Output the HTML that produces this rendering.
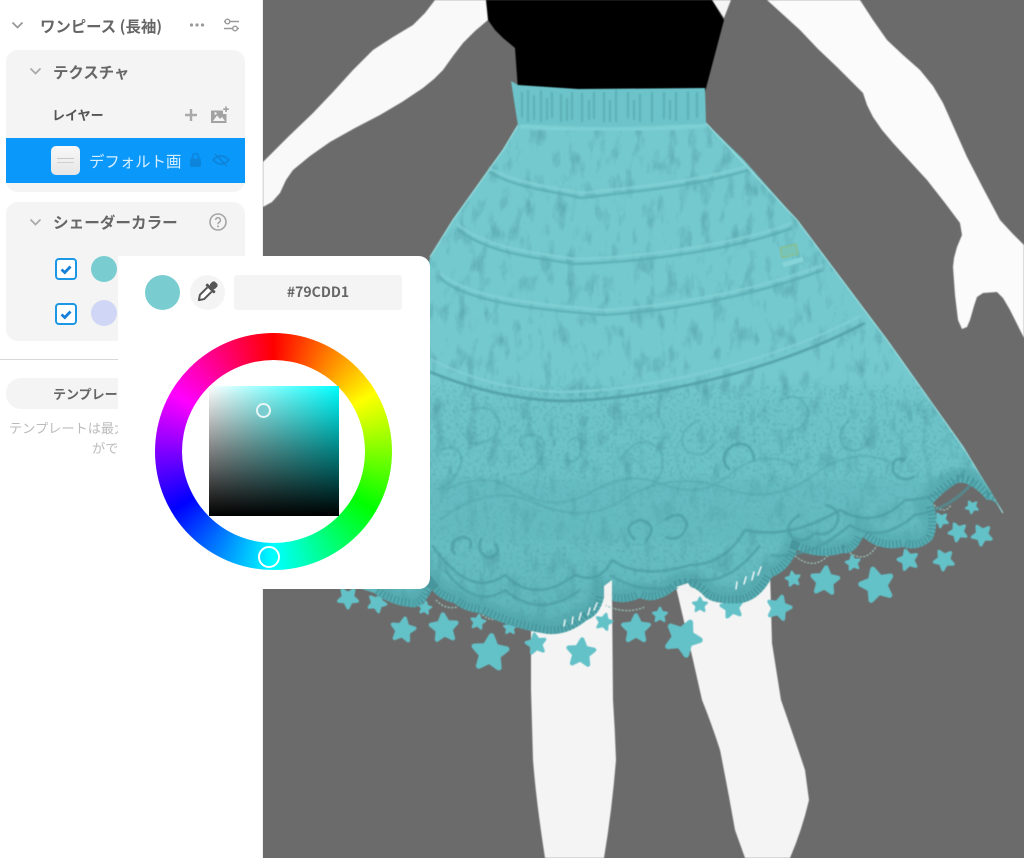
<!DOCTYPE html>
<html lang="ja"><head><meta charset="utf-8"><title>Color</title>
<style>
*{box-sizing:border-box}
html,body{margin:0;padding:0;width:1024px;height:858px;overflow:hidden;background:#6b6b6b}
body{position:relative;font-family:"Liberation Sans","Noto Sans CJK JP",sans-serif}
#scene{position:absolute;left:0;top:0;width:1024px;height:858px;filter:blur(.5px)}
#panel{position:absolute;left:0;top:0;width:263px;height:858px;background:#fff;border-right:1px solid #eee;filter:blur(.35px)}
.abs{position:absolute}
.t{position:absolute;white-space:nowrap;line-height:20px;font-family:"Noto Sans CJK JP",sans-serif}
.card{position:absolute;left:6px;width:239px;background:#f4f4f4;border-radius:12px}
.cb{position:absolute;left:55px;width:22px;height:22px;border:2px solid #1c97e6;border-radius:4px;background:#fff}
.dot{position:absolute;border-radius:50%}
#pop{position:absolute;left:118px;top:256px;width:312px;height:333px;background:#fff;border-radius:0 11px 11px 11px;filter:blur(.3px)}
</style></head><body>

<svg id="scene" viewBox="0 0 1024 858" xmlns="http://www.w3.org/2000/svg">
<defs>
<filter id="tex" x="0" y="0" width="100%" height="100%" color-interpolation-filters="sRGB">
<feTurbulence type="fractalNoise" baseFrequency="0.09 0.04" numOctaves="4" seed="7" result="n"/>
<feColorMatrix in="n" type="matrix" values="0 0 0 0 0.3  0 0 0 0 0.6  0 0 0 0 0.63  0 0 0 1.5 -0.78"/>
<feComposite in2="SourceAlpha" operator="in" result="d"/>
<feMerge><feMergeNode in="SourceGraphic"/><feMergeNode in="d"/></feMerge>
</filter>
<filter id="fine" x="0" y="0" width="100%" height="100%" color-interpolation-filters="sRGB">
<feTurbulence type="fractalNoise" baseFrequency="0.3" numOctaves="2" seed="3"/>
<feColorMatrix type="matrix" values="0 0 0 0 0.3  0 0 0 0 0.6  0 0 0 0 0.63  0 0 0 2 -0.98"/>
</filter>
<filter id="soft"><feGaussianBlur stdDeviation="0.7"/></filter>
<filter id="soft3"><feGaussianBlur stdDeviation="3"/></filter>
<linearGradient id="sk" gradientUnits="userSpaceOnUse" x1="0" y1="125" x2="0" y2="630">
<stop offset="0" stop-color="#74c9ce"/><stop offset=".5" stop-color="#74c9ce"/><stop offset=".56" stop-color="#6ec4c9"/><stop offset=".8" stop-color="#68c0c5"/><stop offset="1" stop-color="#5db5ba"/>
</linearGradient>
<polygon id="s" points="0,-.9 .27,-.35 .85,-.28 .42,.13 .53,.73 0,.42 -.53,.73 -.42,.13 -.85,-.28 -.27,-.35" stroke-linejoin="round" stroke-width=".3"/>
<path id="edge" d="M1003,513 Q995,498 987,500 Q970,480 957,483 Q945,490 933,503 Q940,525 932,540 Q918,552 903,547 Q880,552 863,537 Q855,555 843,553 Q820,560 797,550 Q790,570 772,577 Q760,600 741,603 Q715,605 705,597 Q690,580 675,590 Q655,605 640,598 Q620,607 604,597 Q600,615 587,620 Q565,638 542,633 Q510,628 480,613 Q465,612 454,603 Q440,600 432,590 Q422,610 410,607 Q390,605 374,593"/>
<clipPath id="skc"><path d="M518,125 L706,123 L744,160 L797,220 L887,340 L963,447 L990,490 L1003,513 Q995,498 987,500 Q970,480 957,483 Q945,490 933,503 Q940,525 932,540 Q918,552 903,547 Q880,552 863,537 Q855,555 843,553 Q820,560 797,550 Q790,570 772,577 Q760,600 741,603 Q715,605 705,597 Q690,580 675,590 Q655,605 640,598 Q620,607 604,597 Q600,615 587,620 Q565,638 542,633 Q510,628 480,613 Q465,612 454,603 Q440,600 432,590 Q422,610 410,607 Q390,605 374,593 L350,585 L380,500 L430,257 L453,220 L503,150Z"/></clipPath>
</defs>
<rect width="1024" height="858" fill="#6b6b6b"/>

<!-- legs -->
<path d="M531,620 L612,590 L613,700 Q615,730 616,760 Q612,810 604,858 L545,858 Q536,800 533,760 L531,690Z" fill="#f4f4f4"/>
<path d="M672,570 L770,570 L772,643 L781,700 Q795,740 805,770 L809,800 Q802,830 790,858 L745,858 L735,830 Q728,790 720,750 Q712,725 702,700 L693,660Z" fill="#f4f4f4"/>

<!-- left arm -->
<path d="M435,0 L425,13 L413,25 L393,37 L373,50 L353,70 L333,92 L313,113 L288,137 L263,162 L263,207 L272,202 L280,193 L286,180 L293,170 L310,156 L330,142 L355,128 L380,115 L402,102 L423,88 L434,79 L443,70 L453,56 L463,43 L475,31 L488,20 L488,0Z" fill="#f9f9f9"/>

<!-- right arm + hand -->
<path d="M767,0 L800,30 L818,49 L837,67 L863,93 L867,105 L873,117 L882,130 L893,143 L927,180 L945,203 L960,223 L962,235 L957,247 L954,258 L953,267 L955,295 L958,320 L962,329 L967,327 L970,320 L974,306 L977,297 L983,293 L997,292 L1003,298 L1010,310 L1024,338 L1024,245 L1012,233 L1000,220 L983,188 L967,157 L955,130 L943,103 L933,86 L920,70 L903,55 L887,40 L873,20 L860,0Z" fill="#fbfbfb"/>
<path d="M712,0 L731,0 L724,18Z" fill="#f5f5f5"/>

<!-- torso -->
<path d="M486,0 L488,20 L495,30 L503,38 L515,48 L518,90 L705,92 L724,20 L712,0Z" fill="#000"/>

<!-- stars -->
<g fill="#63c1c8" stroke="#63c1c8">
<use href="#s" transform="translate(348 598) rotate(180) scale(11)"/>
<use href="#s" transform="translate(377 603) rotate(170) scale(10)"/>
<use href="#s" transform="translate(403 630) rotate(10) scale(13)"/>
<use href="#s" transform="translate(444 628) rotate(-5) scale(15)"/>
<use href="#s" transform="translate(425 608) rotate(10) scale(7)"/>
<use href="#s" transform="translate(490 653) rotate(5) scale(19)"/>
<use href="#s" transform="translate(478 622) rotate(10) scale(8)"/>
<use href="#s" transform="translate(510 628) rotate(0) scale(7)"/>
<use href="#s" transform="translate(536 644) rotate(-10) scale(11)"/>
<use href="#s" transform="translate(581 653) rotate(5) scale(15)"/>
<use href="#s" transform="translate(604 622) rotate(15) scale(9)"/>
<use href="#s" transform="translate(636 629) rotate(0) scale(15)"/>
<use href="#s" transform="translate(683 638) rotate(25) scale(19)"/>
<use href="#s" transform="translate(660 615) rotate(0) scale(8)"/>
<use href="#s" transform="translate(700 605) rotate(0) scale(8)"/>
<use href="#s" transform="translate(732 607) rotate(-10) scale(12)"/>
<use href="#s" transform="translate(779 608) rotate(15) scale(13)"/>
<use href="#s" transform="translate(793 579) rotate(-10) scale(8)"/>
<use href="#s" transform="translate(825 581) rotate(5) scale(15)"/>
<use href="#s" transform="translate(853 563) rotate(-10) scale(8)"/>
<use href="#s" transform="translate(877 585) rotate(-15) scale(18)"/>
<use href="#s" transform="translate(908 560) rotate(-15) scale(11)"/>
<use href="#s" transform="translate(944 560) rotate(-30) scale(11)"/>
<use href="#s" transform="translate(958 532) rotate(-25) scale(10)"/>
<use href="#s" transform="translate(982 535) rotate(-30) scale(11)"/>
<use href="#s" transform="translate(941 520) rotate(-30) scale(8)"/>
<use href="#s" transform="translate(972 507) rotate(-30) scale(7)"/>
</g>
<g fill="none" stroke="#9cc6ba" stroke-width="1.3" stroke-dasharray="2 1.5">
<path d="M795,556 Q815,572 830,553"/>
<path d="M850,553 Q868,565 880,540"/>
<path d="M934,505 Q945,515 951,505"/>
<path d="M436,600 Q445,610 457,607"/>
<path d="M480,612 Q490,625 505,615"/>
<path d="M605,605 Q625,615 645,607"/>
<path d="M893,520 a6,6 0 1 0 .1,0"/>
</g>

<!-- skirt -->
<path id="skirt" filter="url(#tex)" fill="url(#sk)" d="M518,125 L706,123 L744,160 L797,220 L887,340 L963,447 L990,490 L1003,513 Q995,498 987,500 Q970,480 957,483 Q945,490 933,503 Q940,525 932,540 Q918,552 903,547 Q880,552 863,537 Q855,555 843,553 Q820,560 797,550 Q790,570 772,577 Q760,600 741,603 Q715,605 705,597 Q690,580 675,590 Q655,605 640,598 Q620,607 604,597 Q600,615 587,620 Q565,638 542,633 Q510,628 480,613 Q465,612 454,603 Q440,600 432,590 Q422,610 410,607 Q390,605 374,593 L350,585 L380,500 L430,257 L453,220 L503,150Z"/>
<path d="M518,125 L503,150 L453,220 L430,257 M706,123 L797,220 L887,340 L963,447 L1003,513" fill="none" stroke="#9adfe0" stroke-width="1.2"/>
<!-- lace mesh + bottom dark band -->
<g clip-path="url(#skc)">
<rect x="430" y="385" width="580" height="255" filter="url(#fine)" opacity=".55"/>
<use href="#edge" fill="none" stroke="#4fa3a8" stroke-width="30" opacity=".6" filter="url(#soft3)"/>
<rect x="430" y="480" width="560" height="60" fill="#5cb3b8" opacity=".35" filter="url(#soft3)"/>
<use href="#edge" fill="none" stroke="#438f95" stroke-width="16" stroke-dasharray="1.5 2.5" opacity=".75"/>
</g>
<!-- waistband -->
<path d="M511,81 L518,85 L578,89 L705,88 L706,123 L650,130 L518,126Z" fill="#6cc4ca"/>
<g stroke="#4f9fa5" stroke-width="1.7" opacity=".7" filter="url(#soft)">
<path d="M522,92V118M528,90V122M534,95V120M541,90V122M547,98V120M552,92V118M561,94V122M567,98V121M572,92V120M582,93V122M589,100V120M594,92V119M604,92V122M610,100V122M616,90V122M628,92V118M634,100V120M640,94V122M652,92V122M664,92V119M670,100V120M676,92V121M688,92V120M697,92V118"/>
</g>
<path d="M520,126 Q610,134 706,125" fill="none" stroke="#7dd0d4" stroke-width="5" filter="url(#soft)"/>
<!-- tier lines -->
<g fill="none" filter="url(#soft)">
<path d="M489,172 C520,190 560,192 581,198 C630,192 700,186 748,170" stroke="#58abb0" stroke-width="1.8"/>
<path d="M489,168 C520,185 560,188 581,193 C630,188 700,181 748,166" stroke="#82d1d5" stroke-width="2"/>
<path d="M457,229 C490,255 540,258 574,264 C650,262 740,248 792,228" stroke="#58abb0" stroke-width="1.8"/>
<path d="M457,224 C490,250 540,253 574,259 C650,257 740,243 792,223" stroke="#82d1d5" stroke-width="2"/>
<path d="M440,278 C470,305 550,310 603,315 C690,310 770,290 823,270" stroke="#58abb0" stroke-width="1.8"/>
<path d="M440,273 C470,300 550,305 603,310 C690,305 770,285 823,265" stroke="#82d1d5" stroke-width="2"/>
<path d="M430,372 C470,388 510,399 560,401 C640,401 770,373 865,323" stroke="#4f9ea4" stroke-width="2.4"/>
<path d="M430,359 C470,379 510,390 560,392 C640,392 770,364 862,315" stroke="#80d0d4" stroke-width="2"/>
</g>
<path d="M780,248 L796,244 L798,254 L782,258Z" fill="#78c5b8" stroke="#8fbb80" stroke-width="1"/>
<path d="M783,265 L803,259" stroke="#86d4d7" stroke-width="5"/>
<!-- lace -->
<g fill="none" stroke="#4a9aa0" stroke-width="2.2" opacity=".8" filter="url(#soft)">
<path d="M432,545 Q470,600 505,575 Q535,605 575,575 Q600,585 612,560 Q640,580 690,565 Q725,565 745,530 Q790,540 840,510 Q875,530 905,500 Q945,500 965,470"/>
<path d="M445,570 Q475,610 505,590 Q540,620 580,590"/>
<path d="M610,575 Q650,600 695,580 Q730,585 760,545"/>
<path d="M770,555 Q810,560 850,525 Q880,545 915,515 Q950,510 975,480"/>
<path d="M455,555 q-8,-15 8,-18 q12,2 6,12 M482,538 q-8,12 6,20 q14,-3 8,-14"/>
<path d="M635,540 q-15,-14 5,-20 q20,5 5,22 M665,520 q18,-12 22,5 q-5,18 -22,12"/>
<path d="M800,515 q-18,10 -8,22 q14,8 22,-4 M825,505 q20,5 10,22 q-8,10 -20,6"/>
<path d="M730,470 q-14,-14 4,-25 q18,-5 20,15 M905,460 q-14,-5 -12,12 q10,12 22,4"/>
</g>
<g fill="none" stroke="#4f9fa5" stroke-width="1.8" opacity=".5" filter="url(#soft)">
<path d="M525,450 q-15,-15 10,-15 q15,5 5,25 q-5,10 -20,15 M570,440 q15,-8 10,15 q-5,10 -15,5"/>
<path d="M440,450 q18,-8 22,10 q-5,22 -25,30 M620,460 q20,-30 40,-10 q10,25 -15,40"/>
<path d="M470,410 q25,-8 30,15 q-5,20 -30,18 M700,420 q-25,10 -15,30 q18,12 30,-8 M780,400 q20,-10 28,10 q0,20 -22,22 M850,420 q-16,12 -6,28 q18,8 26,-10"/>
<path d="M440,520 q50,-40 100,-15 q50,20 90,-10 q50,-25 100,-5 q50,15 90,-20 q40,-25 75,-5"/>
<path d="M445,490 q40,-20 70,0 q40,25 80,0 q35,-20 70,-5 q40,15 70,-15 q30,-20 60,-5"/>
</g>
<!-- lace white holes -->
<g fill="#f2f2f2">
<path d="M604,586 L612,580 L612,600 L604,607Z"/>
<path d="M676,587 L688,583 L696,595 L684,591Z"/>
</g>
<g stroke="#fff" stroke-width="1.5" stroke-linecap="round" opacity=".9">
<path d="M761,567l-3,8M754,572l-2,8M746,577l-2,7M737,582l-1,7M597,603l-3,7M590,608l-2,7M581,613l-2,7M573,617l-1,7M565,620l-1,6"/>
</g>
</svg>

<div id="panel">
  <svg class="abs" style="left:11px;top:21px" width="13" height="9" viewBox="0 0 13 9"><path d="M1.5,1.5 L6.5,6.5 L11.5,1.5" fill="none" stroke="#999" stroke-width="1.8"/></svg>
  <div class="t" style="left:40px;top:16px;font-size:15.4px;font-weight:700;color:#666">ワンピース (長袖)</div>
  <svg class="abs" style="left:189px;top:22px" width="16" height="6"><g fill="#999"><circle cx="2.5" cy="3" r="1.6"/><circle cx="8" cy="3" r="1.6"/><circle cx="13.5" cy="3" r="1.6"/></g></svg>
  <svg class="abs" style="left:223px;top:17px" width="17" height="16" viewBox="0 0 17 16"><g fill="none" stroke="#999" stroke-width="1.4"><path d="M7,4.5H16M1,4.5H2M1,11.5H10M14,11.5H16"/><circle cx="4.5" cy="4.5" r="2.3"/><circle cx="12" cy="11.5" r="2.3"/></g></svg>

  <div class="card" style="top:50px;height:142px"></div>
  <svg class="abs" style="left:29px;top:67px" width="13" height="9" viewBox="0 0 13 9"><path d="M1.5,1.5 L6.5,6.5 L11.5,1.5" fill="none" stroke="#aaa" stroke-width="1.8"/></svg>
  <div class="t" style="left:53px;top:62px;font-size:15.4px;font-weight:700;color:#666">テクスチャ</div>
  <div class="t" style="left:52px;top:105px;font-size:13px;font-weight:700;color:#555">レイヤー</div>
  <svg class="abs" style="left:184px;top:108px" width="14" height="14"><path d="M7,1V13M1,7H13" stroke="#aaa" stroke-width="2.4"/></svg>
  <svg class="abs" style="left:210px;top:106px" width="20" height="18" viewBox="0 0 20 18"><path d="M1,4.5H13V8H16.5V17H1Z" fill="#a2a2a2"/><path d="M3,15L7,9.5L10,13L12,11L15,15Z" fill="#f4f4f4"/><circle cx="5.5" cy="7.5" r="1.2" fill="#f4f4f4"/><path d="M16,0.5V6M13.2,3.2H18.8" stroke="#a2a2a2" stroke-width="1.6"/></svg>

  <div class="abs" style="left:6px;top:138px;width:239px;height:45px;background:#0a98fb"></div>
  <div class="abs" style="left:51px;top:146px;width:29px;height:29px;border-radius:5px;background:linear-gradient(#f8f8f8,#e6e6e6)"></div>
  <div class="abs" style="left:57px;top:158px;width:17px;height:1px;background:#c9c9c9"></div>
  <div class="abs" style="left:57px;top:162px;width:17px;height:1px;background:#cfcfcf"></div>
  <div class="t" style="left:89px;top:151px;font-size:15.4px;color:#d6eeff">デフォルト画</div>
  <svg class="abs" style="left:189px;top:152px" width="13" height="16" viewBox="0 0 13 16"><rect x="1" y="6.5" width="11" height="8.5" rx="1.5" fill="#0d85da"/><path d="M3.5,7V4.5a3,3 0 0 1 6,0V7" fill="none" stroke="#0d85da" stroke-width="1.6"/></svg>
  <svg class="abs" style="left:212px;top:153px" width="18" height="14" viewBox="0 0 18 14"><path d="M1,7Q9,-1 17,7Q9,15 1,7Z" fill="none" stroke="#0d85da" stroke-width="1.8"/><path d="M3,1L15,13" stroke="#0d85da" stroke-width="1.8"/></svg>

  <div class="card" style="top:202px;height:139px"></div>
  <svg class="abs" style="left:29px;top:218px" width="13" height="9" viewBox="0 0 13 9"><path d="M1.5,1.5 L6.5,6.5 L11.5,1.5" fill="none" stroke="#aaa" stroke-width="1.8"/></svg>
  <div class="t" style="left:53px;top:212px;font-size:15.6px;font-weight:700;color:#666">シェーダーカラー</div>
  <svg class="abs" style="left:209px;top:213px" width="18" height="18" viewBox="0 0 18 18"><circle cx="9" cy="9" r="8" fill="none" stroke="#a5a5a5" stroke-width="1.6"/><path d="M6.6,7a2.4,2.4 0 1 1 3.7,2.1C9.4,9.7 9,10.2 9,11.2" fill="none" stroke="#a5a5a5" stroke-width="1.5"/><circle cx="9" cy="13.4" r="1" fill="#a5a5a5"/></svg>
  <div class="cb" style="top:258px"><svg width="18" height="18" viewBox="0 0 18 18"><path d="M4.5,9.5L7.8,12.5L13.5,6.5" fill="none" stroke="#1580d8" stroke-width="2.8"/></svg></div>
  <div class="dot" style="left:91px;top:256px;width:26px;height:26px;background:#79cdd1"></div>
  <div class="cb" style="top:303px"><svg width="18" height="18" viewBox="0 0 18 18"><path d="M4.5,9.5L7.8,12.5L13.5,6.5" fill="none" stroke="#1580d8" stroke-width="2.8"/></svg></div>
  <div class="dot" style="left:91px;top:300px;width:26px;height:26px;background:#d0d6f5"></div>

  <div class="abs" style="left:0;top:359px;width:263px;height:1px;background:#d8d8d8"></div>
  <div class="abs" style="left:6px;top:378px;width:239px;height:31px;border-radius:15px;background:#f4f4f4"></div>
  <div class="t" style="left:53px;top:384px;font-size:13px;font-weight:700;color:#666">テンプレート</div>
  <div class="t" style="left:9px;top:418px;font-size:13.2px;color:#bbb">テンプレートは最大</div>
  <div class="t" style="left:92px;top:438px;font-size:13.2px;color:#bbb">がで</div>
</div>

<div id="pop">
  <div class="dot" style="left:27px;top:19px;width:35px;height:35px;background:#79cdd1"></div>
  <div class="dot" style="left:72px;top:19px;width:35px;height:35px;background:#f4f4f4"></div>
  <svg class="abs" style="left:77px;top:24px" width="24" height="24" viewBox="0 0 24 24"><g transform="rotate(45 12 12)"><rect x="8.5" y="-1" width="7" height="7" rx="2.5" fill="#555"/><rect x="6" y="5.5" width="12" height="3" rx="1" fill="#555"/><path d="M9,8.5V19L12,23.5L15,19V8.5" fill="#fff" stroke="#555" stroke-width="2" stroke-linejoin="round"/></g></svg>
  <div class="abs" style="left:116px;top:19px;width:168px;height:35px;background:#f4f4f4;border-radius:3px;text-align:center;font:700 14px/35px 'Noto Sans CJK JP',sans-serif;color:#666">#79CDD1</div>

  <div class="abs" style="left:37px;top:76.5px;width:237px;height:237px;border-radius:50%;background:conic-gradient(#f00,#ff0 60deg,#0f0 120deg,#0ff 180deg,#00f 240deg,#f0f 300deg,#f00 360deg)"></div>
  <div class="abs" style="left:64px;top:103.5px;width:183px;height:183px;border-radius:50%;background:#fff"></div>
  <div class="abs" style="left:140px;top:290px;width:22px;height:22px;border-radius:50%;border:2px solid #fff"></div>

  <div class="abs" style="left:91px;top:130px;width:130px;height:130px;background:linear-gradient(to bottom,rgba(0,0,0,0),#000),linear-gradient(to right,#fff,#0ff)"></div>
  <div class="abs" style="left:137.5px;top:146.5px;width:15px;height:15px;border-radius:50%;border:2px solid #e8f6f7;background:#79cdd1"></div>
</div>
</body></html>
